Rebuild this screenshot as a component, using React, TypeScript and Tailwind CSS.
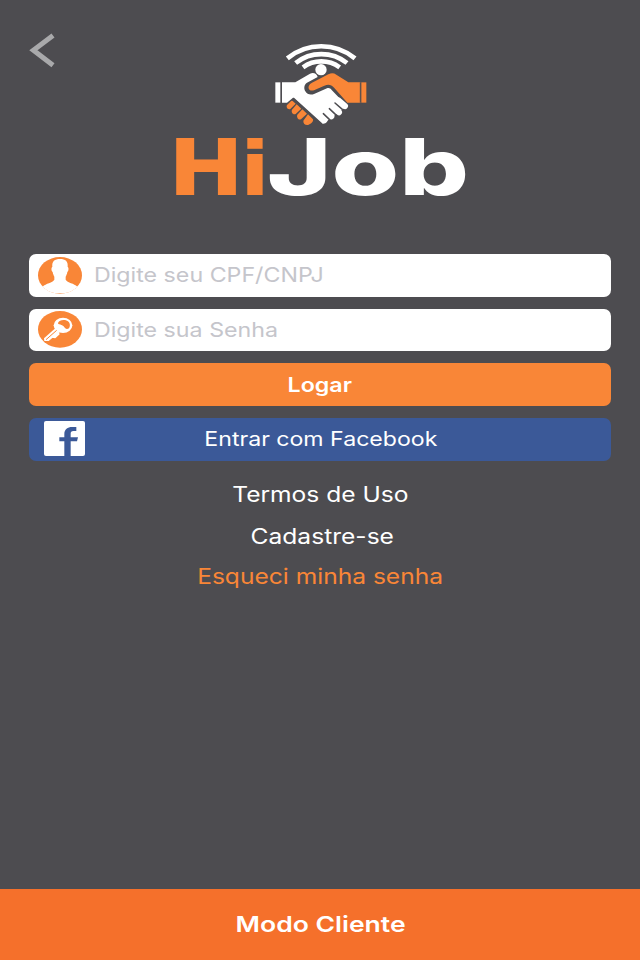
import type { ReactNode } from 'react'

const links = [
    { label: 'Termos de Uso', className: 'mt-[19px] text-white' },
    { label: 'Cadastre-se', className: 'ml-[3px] mt-[13px] text-white' },
    { label: 'Esqueci minha senha', className: 'mt-[11px] text-[#f98637]' },
]

export default function App() {
    return (
        <main className="flex h-[960px] w-[640px] flex-col overflow-hidden bg-[#4d4c50] font-['Inter','Liberation_Sans',sans-serif]">
            <header className="relative flex flex-col items-center pt-[35px]">
                <button aria-label="Voltar" className="absolute left-[29px] top-[32px]">
                    <svg width="27" height="36" viewBox="0 0 27 36" fill="none">
                        <path d="M24 3.4 4.4 18.2 24 33.2" stroke="#a9a9ab" strokeWidth="5" />
                    </svg>
                </button>
                <Handshake />
                <Wordmark />
            </header>

            <form className="mt-[49px] flex flex-col gap-3 px-[29px]">
                <Field placeholder="Digite seu CPF/CNPJ" type="text" icon={<UserIcon />} />
                <Field placeholder="Digite sua Senha" type="password" icon={<KeyIcon />} />
                <button type="button" className="flex h-[42.67px] items-center justify-center rounded-[7px] bg-[#f98637] text-xl font-semibold text-white">
                    <span className="scale-x-[1.16]">Logar</span>
                </button>
                <button type="button" className="relative flex h-[42.67px] items-center justify-center rounded-[7px] bg-[#3b5998] pl-0.5 text-xl text-white">
                    <FacebookIcon />
                    <span className="scale-x-[1.155]">Entrar com Facebook</span>
                </button>
            </form>

            <nav className="flex flex-col items-center pl-px text-[21px] leading-[29px]">
                {links.map((link) => (
                    <a key={link.label} className={`scale-x-[1.17] ${link.className}`}>{link.label}</a>
                ))}
            </nav>

            <footer className="mt-auto flex h-[71px] items-center justify-center bg-[#f5702b] pl-px text-[22px] font-semibold text-white">
                <span className="scale-x-[1.205]">Modo Cliente</span>
            </footer>
        </main>
    )
}

function Field({ placeholder, type, icon }: { placeholder: string, type: string, icon: ReactNode }) {
    return (
        <label className="flex h-[42.67px] items-center overflow-hidden rounded-[7px] bg-white pl-[9px]">
            {icon}
            <input
                type={type}
                placeholder={placeholder}
                className="ml-3 w-[400px] origin-left scale-x-[1.16] bg-transparent text-xl text-gray-700 outline-none placeholder:text-[#c5c5cb]"
            />
        </label>
    )
}

function Handshake() {
    return (
        <svg width="120" height="95" viewBox="0 0 360 285">
            {/* signal waves */}
            <g fill="none" stroke="#fff" strokeWidth="14">
                <path d="M82 70A160 160 0 0 1 285 70" />
                <path d="M107 84A124 124 0 0 1 261 84" />
                <path d="M129 97A94 94 0 0 1 239 97" />
            </g>
            <circle cx="183" cy="104" r="17" fill="#fff" />

            {/* left hand */}
            <path fill="#fff" d="M46 142h15v61H46z" />
            <path fill="#fff" d="M66 142h40l44-26c11-5 20 0 23 10l-32 17c-9 6-10 17-5 26 6 10 16 12 28 7l37-16c6-2 10 0 14 5l46 48-72 54-87-79h-3l-18 15H66z" />
            <g stroke="#fff" strokeWidth="18" strokeLinecap="round">
                <path d="m180 242 13 14" />
                <path d="m200 230 14 14" />
                <path d="m218 215 19 17" />
                <path d="m235 196 20 17" />
            </g>
            <g stroke="#4d4c50" strokeWidth="4.5" strokeLinecap="round">
                <path d="m190 236 18 17" />
                <path d="m208 221 19 18" />
                <path d="m225 204 22 19" />
            </g>
            <g fill="#f98637">
                <path d="m98 198 9 8-16 16c-9 3-14-8-9-13l9-9q4-4 7-2z" />
                <path d="m110 208 14 13-17 16c-9 3-14-6-11-13z" />
                <path d="m127 223 14 13-18 17c-8 3-14-6-11-14z" />
                <path d="m144 238 15 15c2 7-6 14-13 16-8 3-17-2-16-12z" />
            </g>

            {/* right hand */}
            <path fill="#f98637" d="M156 143l49-25c9-4 16-4 24 1l36 23h37v61h-40l-39-44c-10-11-18-12-30-7l-31 14c-19 5-22-15-6-23z" />
            <path fill="#f98637" d="M304 142h15v61h-15z" />
            <path stroke="#4d4c50" strokeWidth="3" d="M301 142v61" />
        </svg>
    )
}

function Wordmark() {
    return (
        <svg width="300" height="75" viewBox="170 130 300 75" className="overflow-visible">
            <text x="172" y="194.5" fontSize="78" textLength="98" lengthAdjust="spacingAndGlyphs" fill="#f98637" className="font-black">
                H<tspan fontSize="75" className="font-['DejaVu_Sans'] font-bold">i</tspan>
            </text>
            <text x="267" y="194.5" fontSize="78" textLength="202" lengthAdjust="spacingAndGlyphs" fill="#fff" className="font-extrabold">Job</text>
        </svg>
    )
}

function UserIcon() {
    return (
        <svg width="44" height="37" viewBox="0 0 132 111" className="shrink-0">
            <ellipse cx="66" cy="55" rx="66" ry="55" fill="#f98637" />
            <path fill="#fff" d="M43 30C41 13 50 6 66 6s25 7 23 24c4 2 3 12-1 15-1 6-3 10-5 14v9c5 9 26 11 35 21-12 13-29 20-52 20s-40-7-52-20c9-10 30-12 35-21v-9c-2-4-4-8-5-14-4-3-5-13-1-15z" />
        </svg>
    )
}

function KeyIcon() {
    return (
        <svg width="44" height="37" viewBox="0 0 132 111" className="shrink-0">
            <ellipse cx="66" cy="55" rx="66" ry="55" fill="#f98637" />
            <ellipse cx="75" cy="43" rx="28" ry="23" fill="#fff" />
            <path fill="#fff" d="M52 52 18 82l1 8h13l34-28z" />
            <path fill="#fff" d="m40 80 12 2 13-12-3-8z" />
            <path fill="#f98637" d="M65 30c15-8 35 1 30 17-2 7-9 9-14 4-5-8-12-10-20-12-2-3 0-6 4-9z" />
            <path fill="none" stroke="#f98637" strokeWidth="3" d="M24 86l32-28" />
        </svg>
    )
}

function FacebookIcon() {
    return (
        <svg width="41" height="35" viewBox="0 0 123 105" className="absolute left-[15px] top-[3.5px]">
            <rect width="123" height="105" rx="6" fill="#fff" />
            <path fill="#3b5998" d="M61 105V61H46V49h15V39c0-14 10-21 23-21h13v12h-9c-6 0-8 3-8 8v11h22l-3 12H80v44z" />
        </svg>
    )
}
